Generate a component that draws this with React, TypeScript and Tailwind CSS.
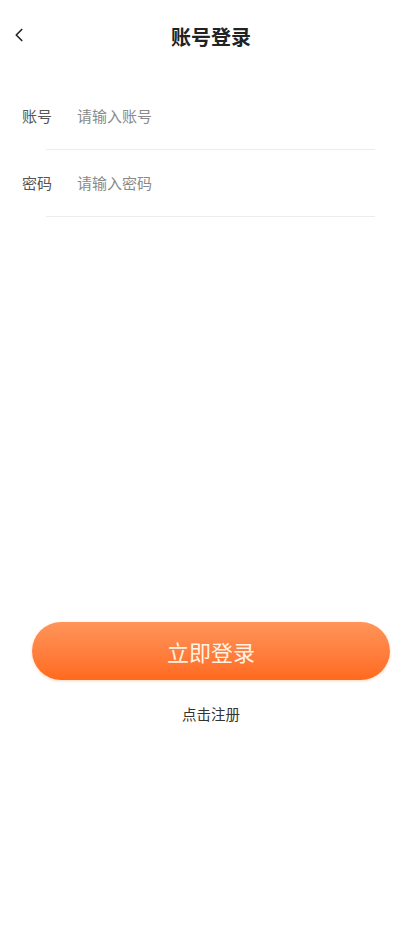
import { ChevronLeft } from 'lucide-react'

const font = { fontFamily: '"Noto Sans CJK SC", "Noto Sans", sans-serif' }

function Field({ label, placeholder, type }: { label: string; placeholder: string; type?: string }) {
  return (
    <div className="flex flex-col">
      <div className="flex h-[66px] items-center pl-[22px]">
        <span className="w-[55px] text-[15px] text-[#555]">{label}</span>
        <input
          type={type || 'text'}
          placeholder={placeholder}
          className="flex-1 bg-transparent text-[15px] text-[#333] outline-none placeholder:text-[#8a8a8a]"
        />
      </div>
      <div className="ml-[46px] mr-[40px] h-px bg-[#ececec]" />
    </div>
  )
}

export default function App() {
  return (
    <div className="flex min-h-[927px] w-[415px] flex-col bg-white" style={font}>
      <div className="relative flex h-[74px] items-center justify-center pl-[7px]">
        <button className="absolute left-[8px] top-[24px] text-[#222]">
          <ChevronLeft className="size-[22px]" strokeWidth={1.8} />
        </button>
        <h1 className="text-[20px] font-bold text-[#222]">账号登录</h1>
      </div>

      <div className="mt-[9px] flex flex-col">
        <Field label="账号" placeholder="请输入账号" />
        <Field label="密码" placeholder="请输入密码" type="password" />
      </div>

      <div className="mt-[405px] flex flex-col items-center pl-[7px]">
        <button className="flex h-[58px] w-[358px] items-center justify-center rounded-full bg-gradient-to-b from-[#ff9459] to-[#ff6a1c] text-[22px] text-[#fff3e6] shadow-[0_1px_3px_rgba(255,120,40,0.3)]">
          立即登录
        </button>
        <button className="mt-[23px] text-[14.5px] text-[#333]">点击注册</button>
      </div>
    </div>
  )
}
